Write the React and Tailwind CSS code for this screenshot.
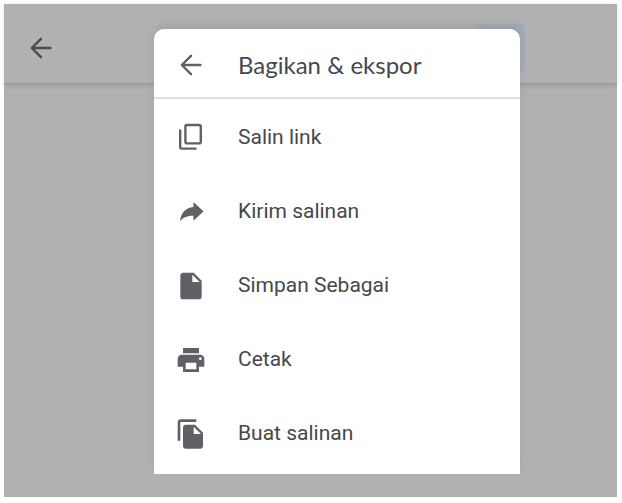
import React from "react";

const MATERIAL = {
  send: "M13.8 8.3V5.3q0-.9.7-.2l6.4 5.9q.6.5 0 1l-6.4 6q-.7.6-.7-.3v-2.9c-4.6 0-7.4 1-10 4 .4-5.200 3.600-10 10-10.500z",
  file: "M6 2c-1.1 0-1.99.9-1.99 2L4 20c0 1.1.89 2 1.99 2H18c1.1 0 2-.9 2-2V8l-6-6H6zm7 7V3.5L18.5 9H13z",
  print:
    "M19 8H5c-1.66 0-3 1.34-3 3v6h4v4h12v-4h4v-6c0-1.66-1.34-3-3-3zm-3 11H8v-5h8v5zm3-7c-.55 0-1-.45-1-1s.45-1 1-1 1 .45 1 1-.45 1-1 1zm-1-9H6v4h12V3z",
  duplicate:
    "M16 1H4c-1.1 0-2 .9-2 2v14h2V3h12V1zm-1 4l6 6v10c0 1.1-.9 2-2 2H7.99C6.89 23 6 22.1 6 21l.01-14c0-1.1.89-2 1.99-2h7zm-1 7h5.5L14 6.5V12z",
};

function Icon({ name }) {
  return (
    <svg viewBox="0 0 24 24" className="size-8 shrink-0 fill-current" aria-hidden="true">
      <path d={MATERIAL[name]} />
    </svg>
  );
}

function BackIcon() {
  return (
    <svg
      viewBox="0 0 32 32"
      className="size-8 shrink-0 fill-none stroke-current"
      strokeWidth="2.4"
      strokeLinecap="round"
      strokeLinejoin="round"
      aria-hidden="true"
    >
      <path d="M25.400 16H7M16 6.800L6.800 16l9.200 9.200" />
    </svg>
  );
}

function CopyIcon() {
  return (
    <svg
      viewBox="0 0 32 32"
      className="size-8 shrink-0 fill-none stroke-current"
      strokeWidth="2.4"
      strokeLinecap="round"
      strokeLinejoin="round"
      aria-hidden="true"
    >
      <rect x="10.4" y="3" width="15.4" height="18.4" rx="1.6" />
      <path d="M5.2 8.4V25q0 1.6 1.6 1.6H20.6" />
    </svg>
  );
}

const ITEMS = [
  { label: "Salin link", icon: <CopyIcon /> },
  { label: "Kirim salinan", icon: <Icon name="send" /> },
  { label: "Simpan Sebagai", icon: <Icon name="file" /> },
  { label: "Cetak", icon: <Icon name="print" /> },
  { label: "Buat salinan", icon: <Icon name="duplicate" /> },
];

export default function App() {
  return (
    <main className="bg-white pt-1 pr-[5px] pb-1.5 pl-1 font-['Roboto','Liberation_Sans',sans-serif]">
      <div className="grid bg-[#b1b1b1]">
        <div className="col-start-1 row-start-1">
          <header className="flex h-20 items-start justify-between border-b border-[#999999] pt-5 pr-[92px] pl-[21px] shadow-[0_1px_5px_rgba(0,0,0,0.14)]">
            <button type="button" aria-label="Kembali" className="pt-2 text-[#4a4b4d]">
              <BackIcon />
            </button>
            <div className="size-12 rounded bg-[#a3abb9]" />
          </header>
        </div>

        <div className="z-10 col-start-1 row-start-1 pt-[25px] pr-[97px] pb-[23px] pl-[150px]">
          <section
            role="dialog"
            aria-labelledby="menu-title"
            className="rounded-t-[10px] bg-white text-[#5f6166] shadow-[0_-5px_8px_rgba(0,0,0,0.08)]"
          >
            <div className="flex h-[70px] items-center gap-[31px] border-b-2 border-[#dedede] pt-1 pl-[21px]">
              <button type="button" aria-label="Kembali ke menu">
                <BackIcon />
              </button>
              <h1
                id="menu-title"
                className="font-['Google_Sans','Lato','Roboto',sans-serif] text-2xl whitespace-nowrap text-[#46484b]"
              >
                Bagikan &amp; ekspor
              </h1>
            </div>
            <ul className="pt-0.5 pb-[3px]">
              {ITEMS.map(({ label, icon }) => (
                <li key={label}>
                  <button
                    type="button"
                    className="flex h-[74px] w-full items-center gap-[31px] pl-[21px] text-left"
                  >
                    {icon}
                    <span className="text-[21px] whitespace-nowrap text-[#46484b]">{label}</span>
                  </button>
                </li>
              ))}
            </ul>
          </section>
        </div>
      </div>
    </main>
  );
}
